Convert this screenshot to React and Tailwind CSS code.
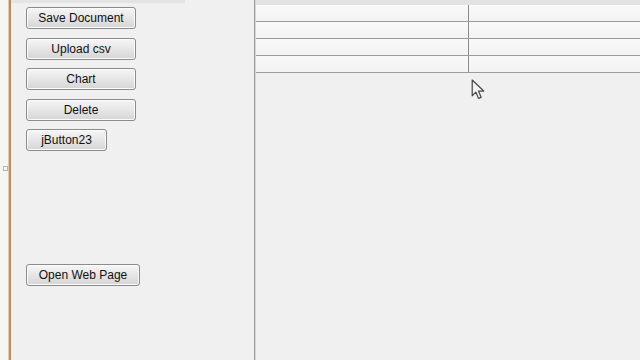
import React from 'react';

const Btn = ({ label, width }) => (
    <button
        className={`h-[22px] ${width} shrink-0 rounded-[3px] border border-[#8a8b8b] bg-gradient-to-b from-[#f6f6f6] via-[#e6e6e6] to-[#d5d5d5] text-[12px] leading-none text-[#111] shadow-[inset_0_0_0_1px_#fbfbfb]`}
    >
        {label}
    </button>
);

const Cursor = () => (
    <svg width="15" height="22" viewBox="0 0 14 21" className="absolute left-[471px] top-[79px]">
        <path
            d="M1 1 L1 16 L4.5 12.5 L7 18.5 L9.5 17.5 L7 11.5 L12 11.5 Z"
            fill="#f4f4f4"
            stroke="#4a4a4a"
            strokeWidth="1.2"
            strokeLinejoin="round"
        />
    </svg>
);

export default function App() {
    const rows = [0, 1, 2, 3];

    return (
        <div
            className="relative w-[640px] h-[360px] flex overflow-hidden bg-[#f0f0f0]"
            style={{ fontFamily: '"Liberation Sans", Tahoma, sans-serif' }}
        >
            {/* left edge + splitter */}
            <div className="w-[8px] h-full bg-[#f5f5f5]" />
            <div className="w-[1px] h-full bg-[#e4caa2]" />
            <div className="w-[2px] h-full bg-[#b69062]" />

            {/* button panel */}
            <div className="w-[243px] h-full flex flex-col">
                <div className="h-[3px] w-[174px] bg-[#e4e4e4]" />
                <div className="flex flex-col items-start gap-[8.5px] pl-[15px] pt-[4px]">
                    <Btn label="Save Document" width="w-[110px]" />
                    <Btn label="Upload csv" width="w-[110px]" />
                    <Btn label="Chart" width="w-[110px]" />
                    <Btn label="Delete" width="w-[110px]" />
                    <Btn label="jButton23" width="w-[81px]" />
                </div>
                <div className="pl-[15px] mt-[111px]">
                    <Btn label="Open Web Page" width="w-[114px]" />
                </div>
            </div>

            {/* divider */}
            <div className="w-[1px] h-full bg-[#9a9a9a]" />
            <div className="w-[1px] h-full bg-[#d6d6d6]" />

            {/* table */}
            <div className="flex-1 flex flex-col">
                <div className="h-[5px] bg-[#e3e3e3]" />
                {rows.map((r) => (
                    <div key={r} className="h-[17px] flex border-b border-[#9c9c9c] bg-gradient-to-b from-[#f9f9f9] to-[#f3f3f3]">
                        <div className="w-[213px] h-full border-r border-[#8c8c8c]" />
                        <div className="flex-1" />
                    </div>
                ))}
            </div>

            {/* splitter handle */}
            <div className="absolute left-[3px] top-[166px] w-[5px] h-[5px] border border-[#b5b5b5] bg-[#f6f6f6]" />

            <Cursor />
        </div>
    );
}
